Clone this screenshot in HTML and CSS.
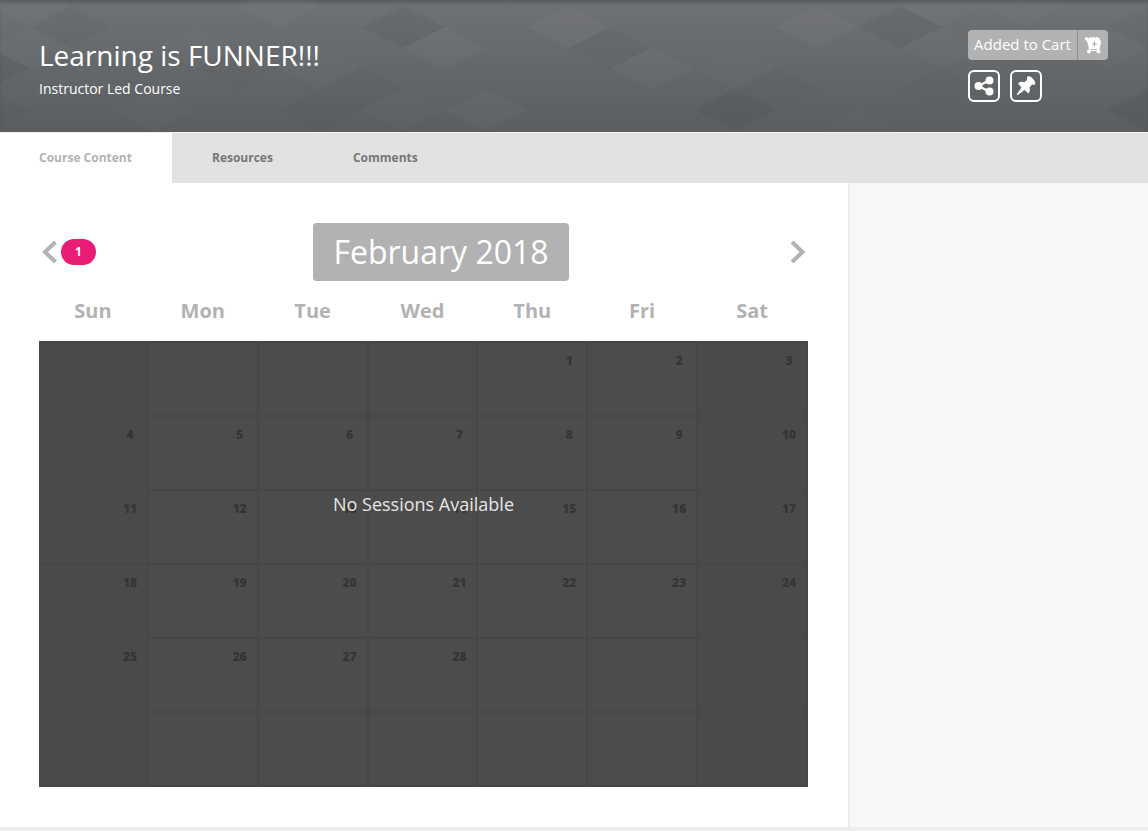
FILE: index.html
```html
<!DOCTYPE html>
<html lang="en">
  <head>
    <meta charset="utf-8" />
    <meta name="viewport" content="width=device-width, initial-scale=1" />
    <title>Learning is FUNNER!!!</title>
    <link rel="stylesheet" href="styles.css" />
  </head>
  <body>
    <header class="banner">
      <!-- diamond pattern -->
      <svg class="pattern" viewBox="0 0 1148 132" preserveAspectRatio="xMidYMin slice" aria-hidden="true">
        <defs>
          <path id="dia" d="M0-21L41.500 0 0 21-41.500 0z" />
        </defs>
        <g fill="#fff" fill-opacity=".028">
          <use href="#dia" x="569" y="27" />
          <use href="#dia" x="652" y="68" />
          <use href="#dia" x="445" y="48" />
          <use href="#dia" x="486" y="110" />
          <use href="#dia" x="279" y="6" />
          <use href="#dia" x="817" y="27" />
        </g>
        <g fill="#fff" fill-opacity=".014">
          <use href="#dia" x="403" y="110" />
          <use href="#dia" x="735" y="68" />
          <use href="#dia" x="30" y="48" />
          <use href="#dia" x="30" y="6" />
          <use href="#dia" x="196" y="48" />
          <use href="#dia" x="154" y="110" />
          <use href="#dia" x="320" y="68" />
          <use href="#dia" x="942" y="6" />
          <use href="#dia" x="1025" y="6" />
          <use href="#dia" x="942" y="48" />
          <use href="#dia" x="1108" y="48" />
          <use href="#dia" x="859" y="130" />
        </g>
        <g fill="#000" fill-opacity=".045">
          <use href="#dia" x="403" y="27" />
          <use href="#dia" x="735" y="110" />
          <use href="#dia" x="900" y="27" />
          <use href="#dia" x="1149" y="110" />
          <use href="#dia" x="-12" y="68" />
        </g>
        <g fill="#000" fill-opacity=".018">
          <use href="#dia" x="-12" y="110" />
          <use href="#dia" x="71" y="27" />
          <use href="#dia" x="320" y="110" />
          <use href="#dia" x="237" y="68" />
          <use href="#dia" x="362" y="89" />
          <use href="#dia" x="610" y="48" />
          <use href="#dia" x="776" y="89" />
          <use href="#dia" x="942" y="89" />
          <use href="#dia" x="1149" y="27" />
        </g>
      </svg>
      <div class="heading">
        <h1>Learning is FUNNER!!!</h1>
        <p>Instructor Led Course</p>
      </div>
      <div class="actions">
        <button type="button" class="cart">
          <span class="cart_text">Added to Cart</span>
          <span class="cart_icon">
            <svg width="18" height="18" viewBox="0 0 18 18" aria-hidden="true">
              <path fill="#fff" d="M1 1.500L2.500 1 4.500 2.500 6 1 7.500 2 9.500 .5 11 2 13 .5 14 2 15.500 1.500 15.500 4 17.200 5 16.800 7.500 15.500 13H5L3.500 6.500 1 3z" />
              <path fill="none" stroke="#fff" stroke-width="2" d="M4.500 14h11" />
              <circle cx="5" cy="15.500" r="2" fill="#fff" />
              <circle cx="14.500" cy="15.500" r="2" fill="#fff" />
              <path fill="none" stroke="#a4a4ac" d="M10.500 5.500v5M8 8h5" />
              <path fill="none" stroke="#b2b2b2" d="M7 13.500h6" />
            </svg>
          </span>
        </button>
        <div class="tools">
          <button type="button" class="tool" aria-label="Share">
            <svg width="20" height="20" viewBox="0 0 20 20" aria-hidden="true">
              <path fill="none" stroke="#fff" stroke-width="2" d="M15 4.500L4.500 10 15 15.500" />
              <g fill="#fff">
                <circle cx="15.500" cy="4.500" r="4" />
                <circle cx="4.500" cy="10" r="4" />
                <circle cx="15.500" cy="15.500" r="4" />
              </g>
            </svg>
          </button>
          <button type="button" class="tool" aria-label="Pin">
            <svg width="20" height="20" viewBox="0 0 20 20" aria-hidden="true">
              <path fill="#fff" d="M11.500.5C13 0 15 .8 16.800 2.600 19 4.800 19.800 7 19 8.500 18 9 17 8.800 16 8.500L13.500 11.500C14.300 13.500 14 15.500 12.500 17.500L8.500 14 1.500 19.300.7 18.500 5.500 11.500 2 7.500C4 5.500 6 5.200 8.200 6.300L11.200 4C10.800 2.800 10.800 1.500 11.500.5z" />
            </svg>
          </button>
        </div>
      </div>
    </header>

    <nav class="tabs">
      <a href="#" class="active">Course Content</a>
      <a href="#">Resources</a>
      <a href="#">Comments</a>
    </nav>

    <div class="content">
      <main class="main">
        <div class="month">
          <div class="prev">
            <button type="button" class="arrow" aria-label="Previous month">
              <svg width="22" height="26" viewBox="0 0 22 26" aria-hidden="true">
                <path d="M16.500 3L6 13 16.500 23" />
              </svg>
            </button>
            <span class="badge">1</span>
          </div>
          <h2>February 2018</h2>
          <button type="button" class="arrow" aria-label="Next month">
            <svg width="22" height="26" viewBox="0 0 22 26" aria-hidden="true">
              <path d="M6 3L16.500 13 6 23" />
            </svg>
          </button>
        </div>

        <div class="calendar">
          <table>
            <thead>
              <tr><th>Sun</th><th>Mon</th><th>Tue</th><th>Wed</th><th>Thu</th><th>Fri</th><th>Sat</th></tr>
            </thead>
            <tbody>
              <tr><td></td><td></td><td></td><td></td><td>1</td><td>2</td><td>3</td></tr>
              <tr><td>4</td><td>5</td><td>6</td><td>7</td><td>8</td><td>9</td><td>10</td></tr>
              <tr><td>11</td><td>12</td><td>13</td><td>14</td><td>15</td><td>16</td><td>17</td></tr>
              <tr><td>18</td><td>19</td><td>20</td><td>21</td><td>22</td><td>23</td><td>24</td></tr>
              <tr><td>25</td><td>26</td><td>27</td><td>28</td><td></td><td></td><td></td></tr>
              <tr><td></td><td></td><td></td><td></td><td></td><td></td><td></td></tr>
            </tbody>
          </table>
          <div class="overlay">No Sessions Available</div>
        </div>
      </main>
      <aside class="side"></aside>
    </div>
  </body>
</html>
```

FILE: styles.css
```css
* {
  box-sizing: border-box;
  margin: 0;
  padding: 0;
}
body {
  font-family: "Open Sans", "Liberation Sans", sans-serif;
  background: #eee;
}
button {
  border: 0;
  background: none;
  font-family: inherit;
  color: #fff;
  cursor: pointer;
}
svg {
  display: block;
}

/* banner */
.banner {
  position: relative;
  display: flex;
  justify-content: space-between;
  padding: 30px 40px 30px 39px;
  background: linear-gradient(#6f7275, #5b5e60);
  box-shadow: inset 0 4px 4px -2px rgba(0, 0, 0, 0.25);
  color: #fff;
}
.pattern {
  position: absolute;
  top: 0;
  left: 0;
  width: 100%;
  height: 100%;
}
.heading,
.actions {
  position: relative;
}
.heading {
  padding-top: 4px;
}
.heading h1 {
  font-size: 28px;
  font-weight: 400;
  line-height: 43px;
}
.heading p {
  font-size: 14px;
  line-height: 24px;
}
.cart {
  display: flex;
  width: 140px;
  height: 30px;
  border-radius: 4px;
  background: #b2b2b2;
  font-size: 15px;
  line-height: 29px;
}
.cart_text {
  flex: 1;
  white-space: nowrap;
}
.cart_icon {
  display: flex;
  align-items: center;
  justify-content: center;
  width: 31px;
  height: 30px;
  border-left: 1px solid #8f8f8f;
}
.tools {
  display: flex;
  gap: 10px;
  margin-top: 10px;
}
.tool {
  display: flex;
  align-items: center;
  justify-content: center;
  width: 32px;
  height: 32px;
  border: 2px solid #fff;
  border-radius: 6px;
}

/* tabs */
.tabs {
  display: flex;
  border-top: 1px solid #f3f3f3;
  background: #e2e2e2;
}
.tabs a {
  padding: 0 40px;
  font-size: 12px;
  font-weight: 700;
  line-height: 50px;
  color: #777;
  text-decoration: none;
}
.tabs .active {
  padding-left: 39px;
  background: #fff;
  color: #b2b2b2;
}

/* content */
.content {
  display: flex;
}
.main {
  flex: 1;
  padding: 40px 40px 40px 39px;
  background: #fff;
}
.side {
  width: 300px;
  border-left: 2px solid #eee;
  background: #f7f7f7;
}

.month {
  display: flex;
  align-items: center;
  justify-content: space-between;
}
.month h2 {
  padding: 0 20px;
  border-radius: 4px;
  background: #b2b2b2;
  font-size: 32px;
  font-weight: 400;
  line-height: 58px;
  color: #fff;
}
.prev {
  display: flex;
  align-items: center;
}
.arrow path {
  fill: none;
  stroke: #b2b2b2;
  stroke-width: 4;
}
.badge {
  width: 35px;
  border-radius: 13px;
  background: #ea1d76;
  font-size: 12px;
  font-weight: 700;
  line-height: 26px;
  color: #fff;
  text-align: center;
}

/* calendar */
.calendar {
  position: relative;
}
table {
  width: 100%;
  table-layout: fixed;
  border-spacing: 0;
}
th {
  height: 60px;
  padding: 0 2px 2px 0;
  font-size: 20px;
  font-weight: 700;
  color: #b2b2b2;
}
td {
  height: 74px;
  padding: 8px 0 0 74px;
  border-right: 2px solid #eee;
  border-bottom: 2px solid #eee;
  background: #fff;
  font-size: 12px;
  font-weight: 800;
  line-height: 20px;
  color: #b2b2b2;
  text-align: center;
  vertical-align: top;
}
tbody tr:first-child td {
  height: 76px;
  border-top: 2px solid #eee;
}
td:first-child,
td:last-child {
  background: #f7f7f7;
}
.overlay {
  /* covers the days, not the weekday names */
  position: absolute;
  top: 60px;
  right: 0;
  bottom: 0;
  left: 0;
  padding-top: 149px;
  background: rgba(0, 0, 0, 0.7);
  font-size: 18px;
  line-height: 28px;
  color: #e6e6e6;
  text-align: center;
}
```
